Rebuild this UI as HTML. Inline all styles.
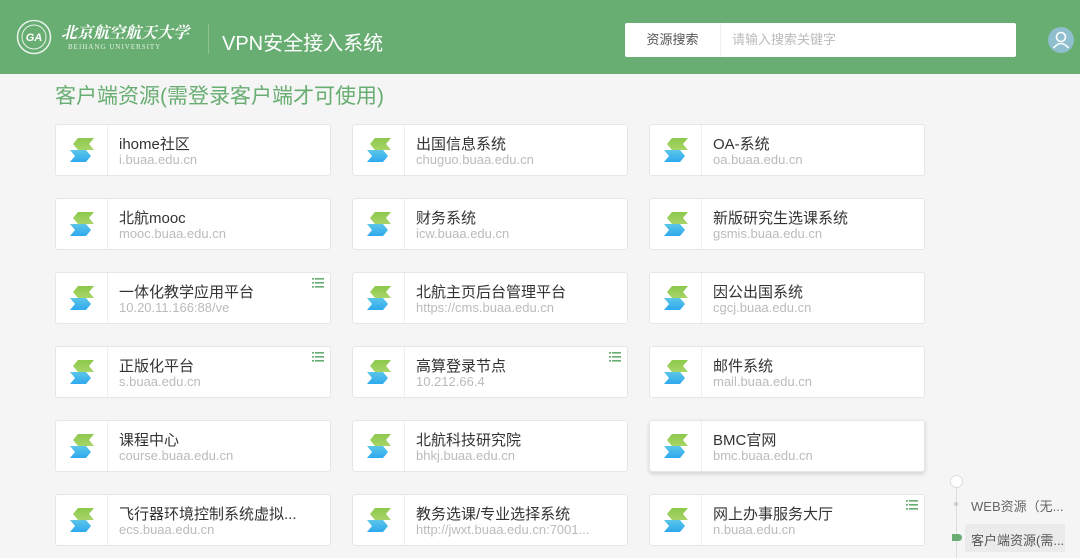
<!DOCTYPE html>
<html><head><meta charset="utf-8"><style>
*{margin:0;padding:0;box-sizing:border-box}
body{width:1080px;height:558px;overflow:hidden;background:#f5f5f5;font-family:"Liberation Sans","Noto Sans CJK SC",sans-serif;position:relative}
.hd{position:absolute;left:0;top:0;width:1080px;height:74px;background:#68ae72}
.title{position:absolute;left:55px;top:80px;font-size:21px;color:#68ae72}
.card{position:absolute;width:276px;height:52px;background:#fff;border:1px solid #e6e6e6;border-radius:3px}
.card .ic{position:absolute;left:0;top:0;width:52px;height:50px;border-right:1px solid #eee}
.card svg.i{position:absolute;left:13px;top:13px}
.card .t{position:absolute;left:63px;top:8px;font-size:15px;color:#333;white-space:nowrap}
.card .u{position:absolute;left:63px;top:27px;font-size:13px;color:#bbb;white-space:nowrap}
.card .m{position:absolute;right:6px;top:4px}
</style></head><body>
<div class="hd">
 <svg style="position:absolute;left:16px;top:19px" width="36" height="36"><circle cx="18" cy="18" r="16.5" fill="none" stroke="#e8f2e9" stroke-width="1.5"/><circle cx="18" cy="18" r="12" fill="none" stroke="#e8f2e9" stroke-width="1"/><text x="18" y="22" font-size="11" fill="#fff" text-anchor="middle" font-style="italic" font-weight="bold">GA</text></svg>
 <div style="position:absolute;left:61px;top:23px;color:#fff;font-size:16px;font-family:'Noto Serif CJK SC',serif;font-weight:bold;font-style:italic;line-height:18px">北京航空航天大学</div>
 <div style="position:absolute;left:68px;top:43px;color:#e5f0e6;font-size:7px;font-family:'Liberation Serif',serif;letter-spacing:1px;line-height:8px">BEIHANG UNIVERSITY</div>
 <div style="position:absolute;left:208px;top:24px;width:1px;height:30px;background:#8cc294"></div>
 <div style="position:absolute;left:222px;top:27px;color:#fff;font-size:20px">VPN安全接入系统</div>
 <div style="position:absolute;left:625px;top:23px;width:391px;height:34px;background:#fff;border-radius:2px">
  <div style="position:absolute;left:0;top:0;width:96px;height:34px;border-right:1px solid #eee;font-size:13px;color:#555;text-align:center;line-height:34px">资源搜索</div>
  <div style="position:absolute;left:107px;top:0;font-size:13px;color:#bbb;line-height:34px">请输入搜索关键字</div>
 </div>
 <svg style="position:absolute;left:1048px;top:27px" width="26" height="26"><circle cx="13" cy="13" r="13" fill="#8fbfcf"/><circle cx="13" cy="10" r="4.5" fill="none" stroke="#fff" stroke-width="1.6"/><path d="M5.5 21 Q13 12 20.5 21" fill="none" stroke="#fff" stroke-width="1.6"/></svg>
</div>
<div class="title">客户端资源(需登录客户端才可使用)</div>

<svg width="0" height="0" style="position:absolute"><defs>
<linearGradient id="gg" x1="0" y1="0" x2="0" y2="1"><stop offset="0" stop-color="#8cc84b"/><stop offset="1" stop-color="#a8d468"/></linearGradient>
<linearGradient id="bg" x1="0" y1="0" x2="0" y2="1"><stop offset="0" stop-color="#5cc6e8"/><stop offset="1" stop-color="#2ea8ee"/></linearGradient>
<g id="ic"><path d="M9 0 L25 0 L20 6 L25 12 L9 12 L4 6 Z" fill="url(#gg)"/><path d="M1 12 L17 12 L22 18 L17 24 L1 24 L6 18 Z" fill="url(#bg)"/></g>
<g id="mn" fill="#68ae72"><rect x="0" y="1" width="2" height="1.6"/><rect x="3" y="1" width="9" height="1.6"/><rect x="0" y="5" width="2" height="1.6"/><rect x="3" y="5" width="9" height="1.6"/><rect x="0" y="9" width="2" height="1.6"/><rect x="3" y="9" width="9" height="1.6"/></g>
</defs></svg>

<div class="card" style="left:55px;top:124px"><div class="ic"><svg class="i" width="26" height="26"><use href="#ic"/></svg></div><div class="t">ihome社区</div><div class="u">i.buaa.edu.cn</div></div>
<div class="card" style="left:352px;top:124px"><div class="ic"><svg class="i" width="26" height="26"><use href="#ic"/></svg></div><div class="t">出国信息系统</div><div class="u">chuguo.buaa.edu.cn</div></div>
<div class="card" style="left:649px;top:124px"><div class="ic"><svg class="i" width="26" height="26"><use href="#ic"/></svg></div><div class="t">OA-系统</div><div class="u">oa.buaa.edu.cn</div></div>

<div class="card" style="left:55px;top:198px"><div class="ic"><svg class="i" width="26" height="26"><use href="#ic"/></svg></div><div class="t">北航mooc</div><div class="u">mooc.buaa.edu.cn</div></div>
<div class="card" style="left:352px;top:198px"><div class="ic"><svg class="i" width="26" height="26"><use href="#ic"/></svg></div><div class="t">财务系统</div><div class="u">icw.buaa.edu.cn</div></div>
<div class="card" style="left:649px;top:198px"><div class="ic"><svg class="i" width="26" height="26"><use href="#ic"/></svg></div><div class="t">新版研究生选课系统</div><div class="u">gsmis.buaa.edu.cn</div></div>

<div class="card" style="left:55px;top:272px"><div class="ic"><svg class="i" width="26" height="26"><use href="#ic"/></svg></div><div class="t">一体化教学应用平台</div><div class="u">10.20.11.166:88/ve</div><svg class="m" width="12" height="12"><use href="#mn"/></svg></div>
<div class="card" style="left:352px;top:272px"><div class="ic"><svg class="i" width="26" height="26"><use href="#ic"/></svg></div><div class="t">北航主页后台管理平台</div><div class="u">https://cms.buaa.edu.cn</div></div>
<div class="card" style="left:649px;top:272px"><div class="ic"><svg class="i" width="26" height="26"><use href="#ic"/></svg></div><div class="t">因公出国系统</div><div class="u">cgcj.buaa.edu.cn</div></div>

<div class="card" style="left:55px;top:346px"><div class="ic"><svg class="i" width="26" height="26"><use href="#ic"/></svg></div><div class="t">正版化平台</div><div class="u">s.buaa.edu.cn</div><svg class="m" width="12" height="12"><use href="#mn"/></svg></div>
<div class="card" style="left:352px;top:346px"><div class="ic"><svg class="i" width="26" height="26"><use href="#ic"/></svg></div><div class="t">高算登录节点</div><div class="u">10.212.66.4</div><svg class="m" width="12" height="12"><use href="#mn"/></svg></div>
<div class="card" style="left:649px;top:346px"><div class="ic"><svg class="i" width="26" height="26"><use href="#ic"/></svg></div><div class="t">邮件系统</div><div class="u">mail.buaa.edu.cn</div></div>

<div class="card" style="left:55px;top:420px"><div class="ic"><svg class="i" width="26" height="26"><use href="#ic"/></svg></div><div class="t">课程中心</div><div class="u">course.buaa.edu.cn</div></div>
<div class="card" style="left:352px;top:420px"><div class="ic"><svg class="i" width="26" height="26"><use href="#ic"/></svg></div><div class="t">北航科技研究院</div><div class="u">bhkj.buaa.edu.cn</div></div>
<div class="card" style="left:649px;top:420px;box-shadow:0 2px 4px rgba(0,0,0,.15)"><div class="ic"><svg class="i" width="26" height="26"><use href="#ic"/></svg></div><div class="t">BMC官网</div><div class="u">bmc.buaa.edu.cn</div></div>

<div class="card" style="left:55px;top:494px"><div class="ic"><svg class="i" width="26" height="26"><use href="#ic"/></svg></div><div class="t">飞行器环境控制系统虚拟...</div><div class="u">ecs.buaa.edu.cn</div></div>
<div class="card" style="left:352px;top:494px"><div class="ic"><svg class="i" width="26" height="26"><use href="#ic"/></svg></div><div class="t">教务选课/专业选择系统</div><div class="u">http://jwxt.buaa.edu.cn:7001...</div></div>
<div class="card" style="left:649px;top:494px"><div class="ic"><svg class="i" width="26" height="26"><use href="#ic"/></svg></div><div class="t">网上办事服务大厅</div><div class="u">n.buaa.edu.cn</div><svg class="m" width="12" height="12"><use href="#mn"/></svg></div>

<div style="position:absolute;left:956px;top:486px;width:1px;height:72px;background:#ddd"></div>
<div style="position:absolute;left:950px;top:475px;width:13px;height:13px;border-radius:50%;background:#fff;border:1px solid #ddd"></div>
<div style="position:absolute;left:954px;top:502px;width:4px;height:4px;border-radius:50%;background:#ccc"></div>
<div style="position:absolute;left:971px;top:496px;font-size:13px;color:#666">WEB资源（无...</div>
<div style="position:absolute;left:965px;top:524px;width:100px;height:28px;background:#ebebeb"></div>
<div style="position:absolute;left:952px;top:534px;width:10px;height:7px;border-radius:0 4px 4px 0;background:#68ae72"></div>
<div style="position:absolute;left:971px;top:530px;font-size:13px;color:#555">客户端资源(需...</div>
</body></html>
